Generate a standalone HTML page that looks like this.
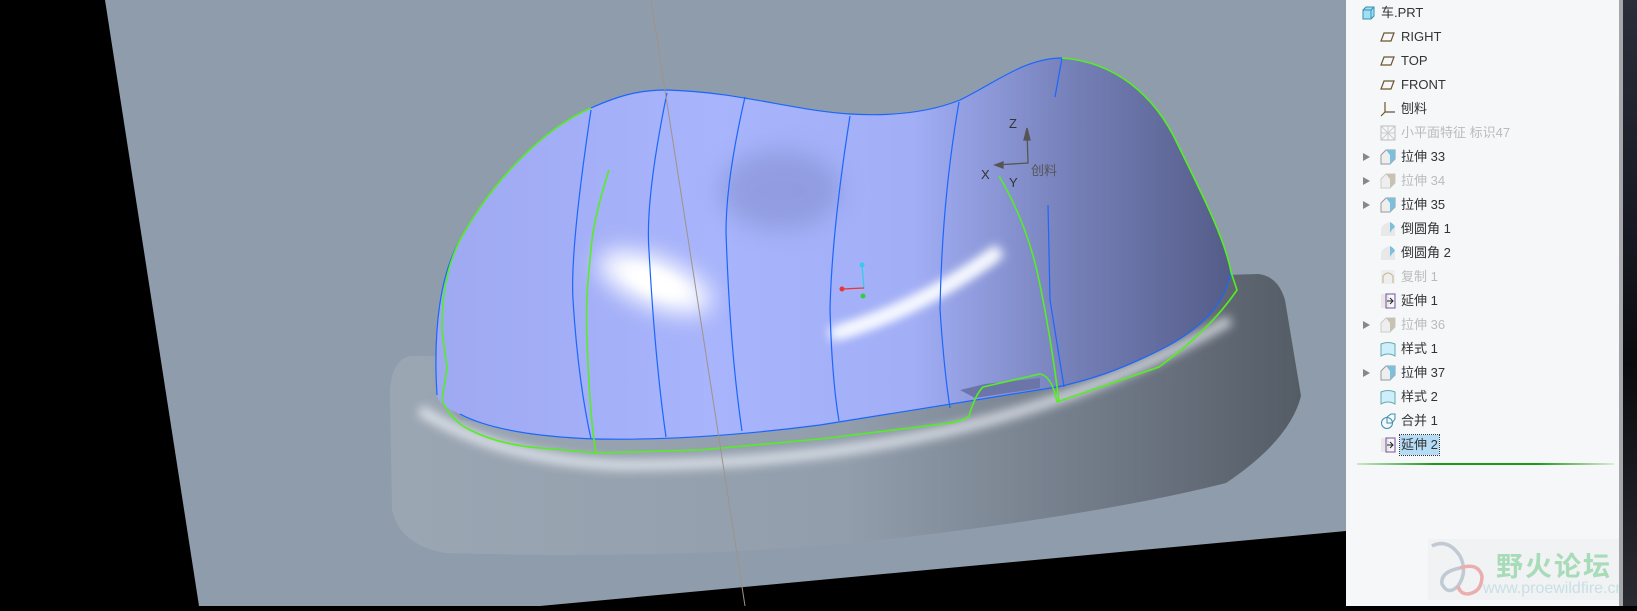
<!DOCTYPE html>
<html><head><meta charset="utf-8"><style>
html,body{margin:0;padding:0;width:1637px;height:606px;overflow:hidden;background:#000}
#vp{position:absolute;left:0;top:0;width:1346px;height:606px}
#panel{position:absolute;left:1346px;top:0;width:273px;height:606px;background:#f5f7f9;font-family:"Liberation Sans","Noto Sans CJK SC",sans-serif;font-size:13px;color:#333}
#strip{position:absolute;left:1619px;top:0;width:4px;height:606px;background:#a5a7aa}
#dark{position:absolute;left:1623px;top:0;width:14px;height:606px;background:linear-gradient(180deg,#2a2e3a,#151820 40%,#0a0b0e 60%,#2a2c33)}
.row{position:absolute;height:20px;line-height:20px;white-space:nowrap}
.row .t{position:absolute;left:55px}
.row .ic{position:absolute;left:34px;top:2px;width:16px;height:16px}
.row .ar{position:absolute;left:17px;top:6px;width:0;height:0;border-left:7px solid #888;border-top:4px solid transparent;border-bottom:4px solid transparent}
.dim{color:#bbb}
</style></head><body>
<div id="vp">
<svg width="1346" height="606" viewBox="0 0 1346 606">
<defs>
<linearGradient id="dome" x1="0" y1="0" x2="1" y2="0">
<stop offset="0" stop-color="#9ea9f2"/><stop offset="0.35" stop-color="#a8b4fb"/><stop offset="0.6" stop-color="#a2aef6"/><stop offset="0.8" stop-color="#7580b8"/><stop offset="1" stop-color="#545c88"/></linearGradient>
<linearGradient id="base" x1="0" y1="0" x2="1" y2="0">
<stop offset="0" stop-color="#9ba6b3"/><stop offset="0.5" stop-color="#929eac"/><stop offset="0.8" stop-color="#6e7784"/><stop offset="1" stop-color="#545c66"/></linearGradient>
<filter id="bl" x="-50%" y="-50%" width="200%" height="200%"><feGaussianBlur stdDeviation="12"/></filter>
<filter id="bl2" x="-50%" y="-50%" width="200%" height="200%"><feGaussianBlur stdDeviation="5"/></filter>
<clipPath id="dc"><path id="dp" d="M437,395 C433,330 440,275 460,240 C490,185 540,130 591,108 C620,95 640,90 667,90 C740,92 790,110 850,114 C900,117 935,110 960,100 C995,83 1025,58 1062,58 C1115,62 1155,95 1178,145 C1205,200 1225,240 1231,272 C1225,305 1200,330 1160,350 C1120,370 1090,380 1057,387 L820,425 C720,438 650,440 596,439 C540,437 490,430 460,414 C445,408 438,402 437,395 Z"/></clipPath>
</defs>
<rect width="1346" height="606" fill="#8f9cac"/>
<polygon points="0,0 105,0 199,606 0,606" fill="#000"/>
<polygon points="540,606 1346,531 1346,606" fill="#000"/>
<!-- base -->
<path d="M410,356 Q392,360 390,390 L392,510 Q400,545 445,553 Q700,560 880,540 Q1100,515 1226,483 Q1290,440 1301,396 L1285,300 Q1278,276 1258,274 L1190,276 L1170,300 L1060,380 L900,410 L600,440 L460,420 L440,395 L437,356 Z" fill="url(#base)"/>
<path d="M420,410 Q500,460 620,465 Q800,465 950,430 Q1100,395 1230,320" stroke="#f4f7fc" stroke-width="10" fill="none" opacity="0.75" filter="url(#bl2)"/>
<!-- dome -->
<path d="M437,395 C433,330 440,275 460,240 C490,185 540,130 591,108 C620,95 640,90 667,90 C740,92 790,110 850,114 C900,117 935,110 960,100 C995,83 1025,58 1062,58 C1115,62 1155,95 1178,145 C1205,200 1225,240 1231,272 C1225,305 1200,330 1160,350 C1120,370 1090,380 1057,387 L820,425 C720,438 650,440 596,439 C540,437 490,430 460,414 C445,408 438,402 437,395 Z" fill="url(#dome)"/>
<g clip-path="url(#dc)">
<ellipse cx="780" cy="190" rx="60" ry="40" fill="#7e89c8" opacity="0.5" filter="url(#bl)"/>
<ellipse cx="655" cy="282" rx="60" ry="24" fill="#fff" transform="rotate(22 655 282)" filter="url(#bl)"/>
<ellipse cx="655" cy="282" rx="30" ry="12" fill="#fff" transform="rotate(22 655 282)" filter="url(#bl2)"/>
<path d="M830,335 Q920,310 1000,250" stroke="#f4f8ff" stroke-width="14" fill="none" filter="url(#bl2)"/>
<path d="M840,332 Q920,308 995,255" stroke="#fff" stroke-width="5" fill="none" filter="url(#bl2)"/>
</g>
<path d="M960,390 L985,384 L1040,378 L1040,388 L975,398 Z" fill="#6b75a8"/>
<!-- blue lines -->
<g stroke="#1a66ff" stroke-width="1.2" fill="none">
<path d="M437,395 C433,330 440,275 460,240 C490,185 540,130 591,108 C620,95 640,90 667,90 C740,92 790,110 850,114 C900,117 935,110 960,100 C995,83 1025,58 1062,58"/>
<path d="M460,414 C490,430 540,437 596,439 C650,440 720,438 820,425 L1057,387 C1090,380 1120,370 1160,350 C1200,330 1225,305 1231,272"/>
<path d="M591,110 Q570,250 573,300 Q578,380 591,439"/>
<path d="M667,93 Q645,200 649,251 Q655,360 666,437"/>
<path d="M745,97 Q726,180 726,232 Q730,350 742,431"/>
<path d="M850,116 Q832,230 830,309 Q832,380 839,421"/>
<path d="M959,102 Q942,200 940,309 Q944,370 950,408"/>
<path d="M1062,58 L1055,97"/>
<path d="M1048,205 L1050,300 L1064,387"/>
</g>
<!-- green lines -->
<g stroke="#55ee22" stroke-width="1.6" fill="none">
<path d="M591,108 C540,130 490,185 460,240 C445,270 442,300 442,330 L447,368 L442,400 Q450,420 470,430 Q500,445 540,448 L596,453 L700,450 L820,439 L950,423 Q965,420 969,416 Q975,395 983,387 L1040,374 Q1052,376 1057,402 L1159,367 Q1210,330 1237,290 L1231,272 C1225,240 1205,200 1178,145 C1155,95 1115,62 1062,58"/>
<path d="M609,170 Q593,220 591,250 Q585,300 587,340 Q590,420 596,453"/>
<path d="M999,176 Q1025,220 1037,271 Q1050,330 1059,402"/>
</g>
<line x1="651" y1="0" x2="745" y2="606" stroke="#9e938a" stroke-width="1"/>
<!-- triad -->
<g stroke="#555" stroke-width="1.3" fill="#555">
<path d="M1027,130 L1028,163 L995,165" fill="none"/>
<path d="M1024,140 L1027,128 L1030,140 Z"/>
<path d="M1003,162 L995,165 L1003,168 Z"/>
</g>
<g font-family="Liberation Sans,Noto Sans CJK SC,sans-serif" font-size="13" fill="#333">
<text x="1009" y="128">Z</text><text x="981" y="179">X</text><text x="1009" y="187">Y</text>
<text x="1031" y="175" fill="#555">创料</text></g>
<line x1="862" y1="265" x2="864" y2="289" stroke="#33ccee" stroke-width="1.2"/>
<line x1="842" y1="289" x2="864" y2="288" stroke="#ee3333" stroke-width="1.2"/>
<circle cx="862" cy="265" r="2.5" fill="#33ccee"/><circle cx="842" cy="289" r="2.5" fill="#ee3333"/><circle cx="863" cy="296" r="2.5" fill="#33cc44"/>
</svg>
</div>
<div id="panel">
<div class="row" style="top:3px;left:-20px"><svg class="ic" viewBox="0 0 16 16"><path d="M3,5 L6,2 L14,2 L14,11 L11,14 L3,14 Z" fill="#9ee0f5" stroke="#3a8fb0"/><path d="M3,5 L11,5 L14,2 M11,5 L11,14" stroke="#3a8fb0" fill="none"/></svg><span class="t">车.PRT</span></div>
<div class="row" style="top:27px"><svg class="ic" viewBox="0 0 16 16"><path d="M4,4 L14,4 L11,12 L1,12 Z" fill="none" stroke="#6b5530" stroke-width="1.2"/></svg><span class="t">RIGHT</span></div>
<div class="row" style="top:51px"><svg class="ic" viewBox="0 0 16 16"><path d="M4,4 L14,4 L11,12 L1,12 Z" fill="none" stroke="#6b5530" stroke-width="1.2"/></svg><span class="t">TOP</span></div>
<div class="row" style="top:75px"><svg class="ic" viewBox="0 0 16 16"><path d="M4,4 L14,4 L11,12 L1,12 Z" fill="none" stroke="#6b5530" stroke-width="1.2"/></svg><span class="t">FRONT</span></div>
<div class="row" style="top:99px"><svg class="ic" viewBox="0 0 16 16"><path d="M5,1 L5,11 L15,11 M5,11 L1,15" fill="none" stroke="#6b5530" stroke-width="1.2"/></svg><span class="t">刨料</span></div>
<div class="row dim" style="top:123px"><svg class="ic" viewBox="0 0 16 16"><rect x="1" y="1" width="14" height="14" fill="none" stroke="#bbb"/><path d="M8,1 L8,15 M1,8 L15,8 M1,1 L15,15 M15,1 L1,15" stroke="#ccc"/></svg><span class="t">小平面特征 标识47</span></div>
<div class="row" style="top:147px"><span class="ar"></span><svg class="ic" viewBox="0 0 16 16"><path d="M1,6 L6,1 L15,1 L15,10 L10,15 L1,15 Z" fill="#eee" stroke="#999"/><path d="M6,1 L15,1 L15,10 L10,15 L10,6 Z" fill="#7cc0dd"/></svg><span class="t">拉伸 33</span></div>
<div class="row dim" style="top:171px"><span class="ar"></span><svg class="ic" viewBox="0 0 16 16"><path d="M1,6 L6,1 L15,1 L15,10 L10,15 L1,15 Z" fill="#eee" stroke="#ccc"/><path d="M6,1 L15,1 L15,10 L10,15 L10,6 Z" fill="#c8c2b0"/></svg><span class="t">拉伸 34</span></div>
<div class="row" style="top:195px"><span class="ar"></span><svg class="ic" viewBox="0 0 16 16"><path d="M1,6 L6,1 L15,1 L15,10 L10,15 L1,15 Z" fill="#eee" stroke="#999"/><path d="M6,1 L15,1 L15,10 L10,15 L10,6 Z" fill="#7cc0dd"/></svg><span class="t">拉伸 35</span></div>
<div class="row" style="top:219px"><svg class="ic" viewBox="0 0 16 16"><path d="M1,15 L1,8 Q3,2 10,1 L15,6 L15,15 Z" fill="#e8e8e8"/><path d="M10,1 Q14,3 15,6 Q12,8 10,12 Z" fill="#7cc0dd"/></svg><span class="t">倒圆角 1</span></div>
<div class="row" style="top:243px"><svg class="ic" viewBox="0 0 16 16"><path d="M1,15 L1,8 Q3,2 10,1 L15,6 L15,15 Z" fill="#e8e8e8"/><path d="M10,1 Q14,3 15,6 Q12,8 10,12 Z" fill="#7cc0dd"/></svg><span class="t">倒圆角 2</span></div>
<div class="row dim" style="top:267px"><svg class="ic" viewBox="0 0 16 16"><rect x="1" y="1" width="14" height="14" fill="#eee"/><path d="M3,14 L3,7 Q8,1 13,7 L13,14" fill="none" stroke="#c8c0a0" stroke-width="1.3"/></svg><span class="t">复制 1</span></div>
<div class="row" style="top:291px"><svg class="ic" viewBox="0 0 16 16"><rect x="1" y="1" width="8" height="14" fill="#e8e8e8"/><rect x="6" y="1" width="9" height="14" fill="none" stroke="#7b4fa0"/><path d="M7,8 L13,8 M10,5 L13,8 L10,11" stroke="#222" fill="none"/></svg><span class="t">延伸 1</span></div>
<div class="row dim" style="top:315px"><span class="ar"></span><svg class="ic" viewBox="0 0 16 16"><path d="M1,6 L6,1 L15,1 L15,10 L10,15 L1,15 Z" fill="#eee" stroke="#ccc"/><path d="M6,1 L15,1 L15,10 L10,15 L10,6 Z" fill="#c8c2b0"/></svg><span class="t">拉伸 36</span></div>
<div class="row" style="top:339px"><svg class="ic" viewBox="0 0 16 16"><path d="M1,15 L1,3 Q8,0 15,3 L15,15 Q8,11 1,15 Z" fill="#cdeefa" stroke="#6aa"/></svg><span class="t">样式 1</span></div>
<div class="row" style="top:363px"><span class="ar"></span><svg class="ic" viewBox="0 0 16 16"><path d="M1,6 L6,1 L15,1 L15,10 L10,15 L1,15 Z" fill="#eee" stroke="#999"/><path d="M6,1 L15,1 L15,10 L10,15 L10,6 Z" fill="#7cc0dd"/></svg><span class="t">拉伸 37</span></div>
<div class="row" style="top:387px"><svg class="ic" viewBox="0 0 16 16"><path d="M1,15 L1,3 Q8,0 15,3 L15,15 Q8,11 1,15 Z" fill="#cdeefa" stroke="#6aa"/></svg><span class="t">样式 2</span></div>
<div class="row" style="top:411px"><svg class="ic" viewBox="0 0 16 16"><circle cx="7" cy="10" r="5.5" fill="none" stroke="#3a8fb0"/><path d="M7,4 L7,10 L12,10 M7,4 L11,1 L15,1 L15,6 L12,10" fill="none" stroke="#3a8fb0"/></svg><span class="t">合并 1</span></div>
<div class="row" style="top:435px"><svg class="ic" viewBox="0 0 16 16"><rect x="1" y="1" width="8" height="14" fill="#e8e8e8"/><rect x="6" y="1" width="9" height="14" fill="none" stroke="#7b4fa0"/><path d="M7,8 L13,8 M10,5 L13,8 L10,11" stroke="#222" fill="none"/></svg><span class="t" style="left:54px;padding:0 1px;background:#b5dcf7;outline:1px dotted #333;line-height:20px">延伸 2</span></div>
<div style="position:absolute;left:11px;top:463px;width:257px;height:2px;background:linear-gradient(90deg,#cfe3cf,#1a9a1a 30%,#1a9a1a 70%,#dde8dd)"></div>
<div style="position:absolute;left:82px;top:539px;width:204px;height:61px;background:rgba(235,238,240,0.5)"></div>
<svg style="position:absolute;left:82px;top:540px" width="60" height="60" viewBox="0 0 60 60"><path d="M4,6 Q20,-2 32,16 Q40,32 30,46 Q20,56 14,44 Q12,32 32,28" fill="none" stroke="#c0cad4" stroke-width="3.5"/><path d="M32,28 Q50,22 54,36 Q54,52 40,54 Q32,54 30,46" fill="none" stroke="#eaaeae" stroke-width="3.5"/></svg>
<div style="position:absolute;left:150px;top:545px;font-family:'Liberation Sans','Noto Sans CJK SC',sans-serif;font-size:27px;font-weight:bold;color:#a8dcb8;letter-spacing:2px">野火论坛</div>
<div style="position:absolute;left:137px;top:580px;font-family:'Liberation Sans',sans-serif;font-size:16px;color:#c8e0e4">www.proewildfire.cn</div>
</div>
<div id="strip"></div><div id="dark"></div>
</body></html>
